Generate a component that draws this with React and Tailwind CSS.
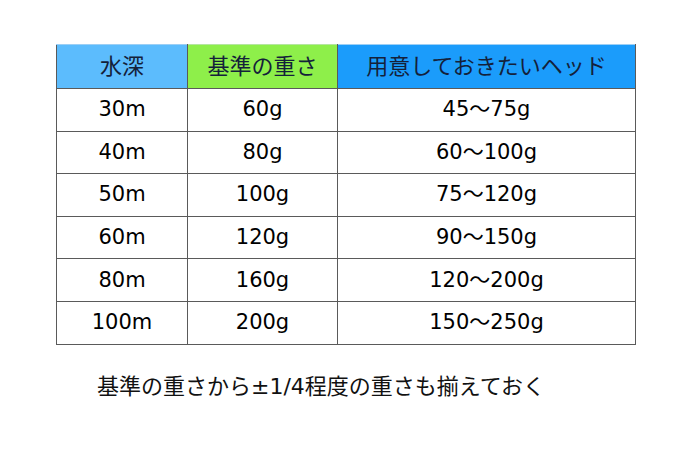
const rows = [
  ['30m', '60g', '45～75g'],
  ['40m', '80g', '60～100g'],
  ['50m', '100g', '75～120g'],
  ['60m', '120g', '90～150g'],
  ['80m', '160g', '120～200g'],
  ['100m', '200g', '150～250g'],
];

export default function App() {
  return (
    <div
      className="w-[695px] h-[460px] bg-white pt-[44px] pl-[56px]"
      style={{ fontFamily: '"DejaVu Sans", "Noto Sans CJK JP", sans-serif' }}
    >
      <table className="border-collapse text-[21px] text-black">
        <thead>
          <tr className="h-[44px] text-[#14213a] text-[22px]">
            <th className="w-[131px] bg-[#5cbcfd] font-normal leading-none border border-[#5a5a5a] border-t-[#9ccff5]">水深</th>
            <th className="w-[150px] bg-[#8eef4a] font-normal leading-none border border-[#5a5a5a] border-t-[#b5e6a0]">基準の重さ</th>
            <th className="w-[298px] bg-[#1b9cfb] font-normal leading-none border border-[#5a5a5a] border-t-[#9ccff5]">用意しておきたいヘッド</th>
          </tr>
        </thead>
        <tbody>
          {rows.map((r) => (
            <tr key={r[0]} className="h-[42.6px]">
              {r.map((c, i) => (
                <td key={i} className="border border-[#5a5a5a] text-center leading-none">
                  {c}
                </td>
              ))}
            </tr>
          ))}
        </tbody>
      </table>
      <p className="mt-[31px] ml-[41px] text-[22px] leading-none text-[#111]">基準の重さから±1/4程度の重さも揃えておく</p>
    </div>
  );
}
